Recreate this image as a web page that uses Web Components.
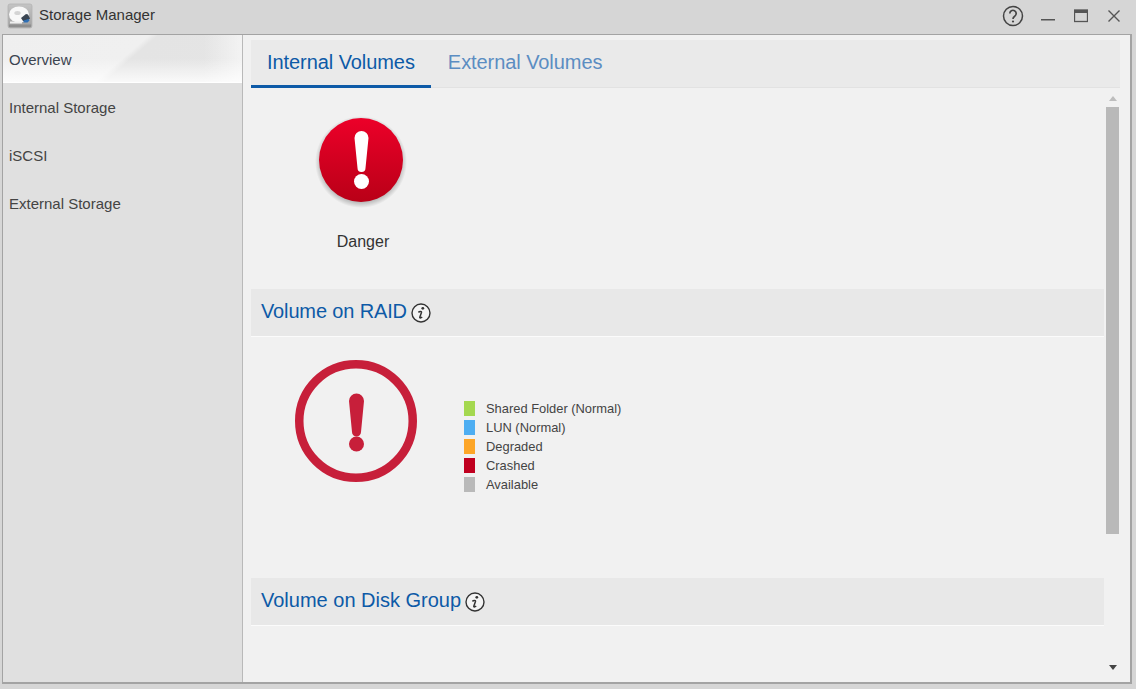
<!DOCTYPE html>
<html>
<head>
<meta charset="utf-8">
<title>Storage Manager</title>
<style>
  html,body{margin:0;height:100%;background:#d6d6d6;overflow:hidden}
  body{font-family:"Liberation Sans",Arial,sans-serif}
</style>
</head>
<body>
<sm-window>
  <sm-titlebar slot="title">Storage Manager</sm-titlebar>
  <sm-sidebar slot="side">
    <sm-navitem active>Overview</sm-navitem>
    <sm-navitem>Internal Storage</sm-navitem>
    <sm-navitem>iSCSI</sm-navitem>
    <sm-navitem>External Storage</sm-navitem>
  </sm-sidebar>
  <sm-tabs slot="tabs"></sm-tabs>
  <sm-danger slot="main">Danger</sm-danger>
  <sm-section slot="main" style="letter-spacing:-.14px">Volume on RAID</sm-section>
  <sm-raid slot="main">
    <sm-legend-item color="#a4d84f">Shared Folder (Normal)</sm-legend-item>
    <sm-legend-item color="#4eaef2">LUN (Normal)</sm-legend-item>
    <sm-legend-item color="#fda628">Degraded</sm-legend-item>
    <sm-legend-item color="#c0001f">Crashed</sm-legend-item>
    <sm-legend-item color="#b9b9b9">Available</sm-legend-item>
  </sm-raid>
  <sm-section slot="main">Volume on Disk Group</sm-section>
  <sm-scrollrail slot="rail"></sm-scrollrail>
</sm-window>

<script>
/* ---------- helper ---------- */
function define(name, html, init) {
    customElements.define(name, class extends HTMLElement {
        constructor() {
            super();
            this.attachShadow({ mode: 'open' }).innerHTML = html;
        }
        connectedCallback() { if (init) init(this); }
    });
}

/* ---------- window frame ---------- */
define('sm-window', `
  <style>
    :host{display:flex;flex-direction:column;width:1136px;height:689px;box-sizing:border-box;padding:0 4px 5px 2px}
    .title{height:34px;flex:none;display:block;margin:0 -4px 0 -2px}
    .frame{flex:1;min-height:0;display:flex;border:1px solid #a3a3a3;border-right-width:2px;border-bottom-width:2px;background:#f1f1f1}
    .main{flex:1;min-width:0;display:flex;flex-direction:column;padding:5px 10px 0 8px}
    .body{flex:1;min-height:0;display:flex}
    .col{width:853px;flex:none}
  </style>
  <div class="title"><slot name="title"></slot></div>
  <div class="frame">
    <slot name="side"></slot>
    <div class="main">
      <slot name="tabs"></slot>
      <div class="body">
        <div class="col"><slot name="main"></slot></div>
        <slot name="rail"></slot>
      </div>
    </div>
  </div>`);

define('sm-titlebar', `
  <style>
    :host{display:flex;align-items:center;height:34px;background:#d6d6d6;color:#333;font-size:15px}
    .logo{width:26px;height:26px;margin:-2px 5px 0 7px;flex:none}
    .name{flex:1;margin-top:-5px;margin-left:1px}
    .btns{display:flex;align-items:center;margin-top:-3px;padding-right:15px;gap:13px}
    svg{display:block}
  </style>
  <svg class="logo" viewBox="0 0 26 26">
    <defs><linearGradient id="b" x1="0" y1="0" x2="0" y2="1"><stop offset="0" stop-color="#c4c4c4"/><stop offset="1" stop-color="#a0a0a0"/></linearGradient></defs>
    <rect x="1" y="1" width="24" height="24" rx="2" fill="url(#b)" stroke="#b4b4b4" stroke-width=".8"/>
    <rect x="2" y="21.500" width="22" height="2.500" fill="#8e8e8e"/>
    <ellipse cx="12" cy="11.500" rx="10" ry="8" fill="#f8f8f8"/>
    <ellipse cx="10.500" cy="10" rx="3.200" ry="2" fill="#d4d4d4"/>
    <path d="M14 15l5-4 2 .5 2 4-3 2.500h-4z" fill="#3a4552"/>
    <path d="M16.500 17.500l5-1.500 1 1.500-2 2h-4z" fill="#2e6fb5"/>
    <path d="M3 18.500h12v2H3z" fill="#efefef"/>
  </svg>
  <span class="name"><slot></slot></span>
  <div class="btns">
    <svg width="22" height="22" viewBox="0 0 22 22" fill="none" stroke="#444"><circle cx="11" cy="11" r="9.500" stroke-width="1.500"/><path d="M7.800 8.500a3.200 3.200 0 1 1 4.900 2.700c-1.200.8-1.700 1.300-1.700 2.800" stroke-width="1.700"/><circle cx="11" cy="16.500" r="1.100" fill="#444" stroke="none"/></svg>
    <svg width="16" height="16" viewBox="0 0 16 16" style="margin-left:3px"><rect x="1" y="11" width="14" height="1.500" fill="#555"/></svg>
    <svg width="14" height="14" viewBox="0 0 14 14" style="margin-left:5px" fill="none"><rect x=".5" y="1" width="13" height="11.500" fill="none" stroke="#555" stroke-width="1.300"/><rect x="0" y="1" width="14" height="3" fill="#555"/></svg>
    <svg width="14" height="14" viewBox="0 0 14 14" style="margin-left:6px"><path d="M1.500 1.500l11 11M12.500 1.500l-11 11" stroke="#555" stroke-width="1.400"/></svg>
  </div>`);

/* ---------- left column ---------- */
define('sm-sidebar', `
  <style>
    :host{display:block;width:239px;flex:none;background:#e0e0e0;border-right:1px solid #b9b9b9}
  </style>
  <slot></slot>`);

define('sm-navitem', `
  <style>
    :host{display:flex;align-items:center;height:48px;box-sizing:border-box;padding:0 0 0 6px;font-size:15px;color:#444}
    :host([active]){color:#3c4450;padding-top:1px;border-bottom:1px solid #fff;
      background:
        linear-gradient(180deg,rgba(255,255,255,0) 50%,rgba(255,255,255,.8) 100%),
        linear-gradient(90deg,rgba(255,255,255,0) 84%,rgba(255,255,255,.55) 100%),
        linear-gradient(139deg,#efefef 0,#f0f0f0 50%,#e4e4e4 53%,#e5e5e5 100%)}
  </style>
  <slot></slot>`);

/* ---------- tabs ---------- */
define('sm-tabs', `
  <style>
    :host{display:flex;height:48px;flex:none;box-sizing:border-box;background:#eaeaea;box-shadow:inset 0 -1px 0 #e2e2e2;font-size:20px;letter-spacing:-.07px}
    .tab{display:flex;align-items:center;padding:0 16px 3px;color:#5b8dc2}
    .on{color:#0d5aa7;box-shadow:inset 0 -3px 0 #0d5aa7}
    .on+.tab{margin-left:1px}
  </style>
  <div class="tab on">Internal Volumes</div>
  <div class="tab">External Volumes</div>`);

/* ---------- status block ---------- */
define('sm-danger', `
  <style>
    :host{display:block;height:201px;width:224px;box-sizing:border-box;padding-top:24px;text-align:center;font-size:16px;color:#333}
    svg{display:block;margin:0 auto 25px;position:relative;left:-2px}
  </style>
  <svg width="96" height="96" viewBox="0 0 96 96">
    <defs>
      <linearGradient id="r" x1="0" y1="0" x2="0" y2="1"><stop offset="0" stop-color="#ec0029"/><stop offset="1" stop-color="#b90017"/></linearGradient>
      <radialGradient id="s"><stop offset=".84" stop-color="#000" stop-opacity=".28"/><stop offset="1" stop-color="#000" stop-opacity="0"/></radialGradient>
    </defs>
    <circle cx="48" cy="50" r="46" fill="url(#s)"/>
    <circle cx="48" cy="48" r="42" fill="url(#r)"/>
    <path d="M41.500 26a7 7 0 0 1 14 0l-3 30a4 4 0 0 1-8 0z" fill="#fff"/>
    <circle cx="48.500" cy="69.500" r="7.500" fill="#fff"/>
  </svg>
  <slot></slot>`);

/* ---------- section header ---------- */
define('sm-section', `
  <style>
    :host{display:flex;align-items:center;height:48px;box-sizing:border-box;padding:0 10px 2px;background:#e8e8e8;border-bottom:1px solid #fbfbfb;font-size:20px;color:#0d5aa7}
    svg{margin:3px 0 0 4px;flex:none}
  </style>
  <slot></slot>
  <svg width="20" height="20" viewBox="0 0 20 20">
    <circle cx="10" cy="10" r="9" fill="#f4f4f4" stroke="#333" stroke-width="1.400"/>
    <circle cx="11.800" cy="5.300" r="1.400" fill="#333"/>
    <path d="M7.400 9.400c1-.9 3.200-1.300 3.100 0l-1.700 4.900c-.2 1 1 .9 2.400-.3" fill="none" stroke="#333" stroke-width="1.500"/>
  </svg>`);

/* ---------- RAID chart ---------- */
define('sm-raid', `
  <style>
    :host{display:flex;height:241px;box-sizing:border-box;padding:23px 0 0 43px}
    svg{display:block;flex:none}
    .legend{margin:39px 0 0 46px;display:flex;flex-direction:column}
  </style>
  <svg width="124" height="124" viewBox="0 0 124 124">
    <circle cx="62" cy="61" r="56.750" fill="none" stroke="#c71f3a" stroke-width="8.500"/>
    <path d="M55 41a7.500 7.500 0 0 1 15 0l-3 31a4.500 4.500 0 0 1-9 0z" fill="#c71f3a"/>
    <circle cx="62.500" cy="84" r="7.500" fill="#c71f3a"/>
  </svg>
  <div class="legend"><slot></slot></div>`);

define('sm-legend-item', `
  <style>
    :host{display:flex;align-items:center;height:19px;font-size:12.900px;color:#444}
    i{display:block;width:11px;height:15px;margin-right:11px;flex:none;background:var(--c)}
    span{margin-top:-1px}
  </style>
  <i></i><span><slot></slot></span>`, el => el.style.setProperty('--c', el.getAttribute('color')));

/* ---------- scroll bar ---------- */
define('sm-scrollrail', `
  <style>
    :host{display:flex;flex-direction:column;align-items:center;width:17px;flex:none;margin-left:0}
    .up{width:0;height:0;border:4px solid transparent;border-top:0;border-bottom:5px solid #bdbdbd;margin-top:8px}
    .thumb{width:13px;height:427px;margin-top:6px;background:#b9b9b9}
    .down{width:0;height:0;border:4px solid transparent;border-bottom:0;border-top:5px solid #444;margin-top:auto;margin-bottom:12px}
  </style>
  <div class="up"></div>
  <div class="thumb"></div>
  <div class="down"></div>`);
</script>
</body>
</html>
